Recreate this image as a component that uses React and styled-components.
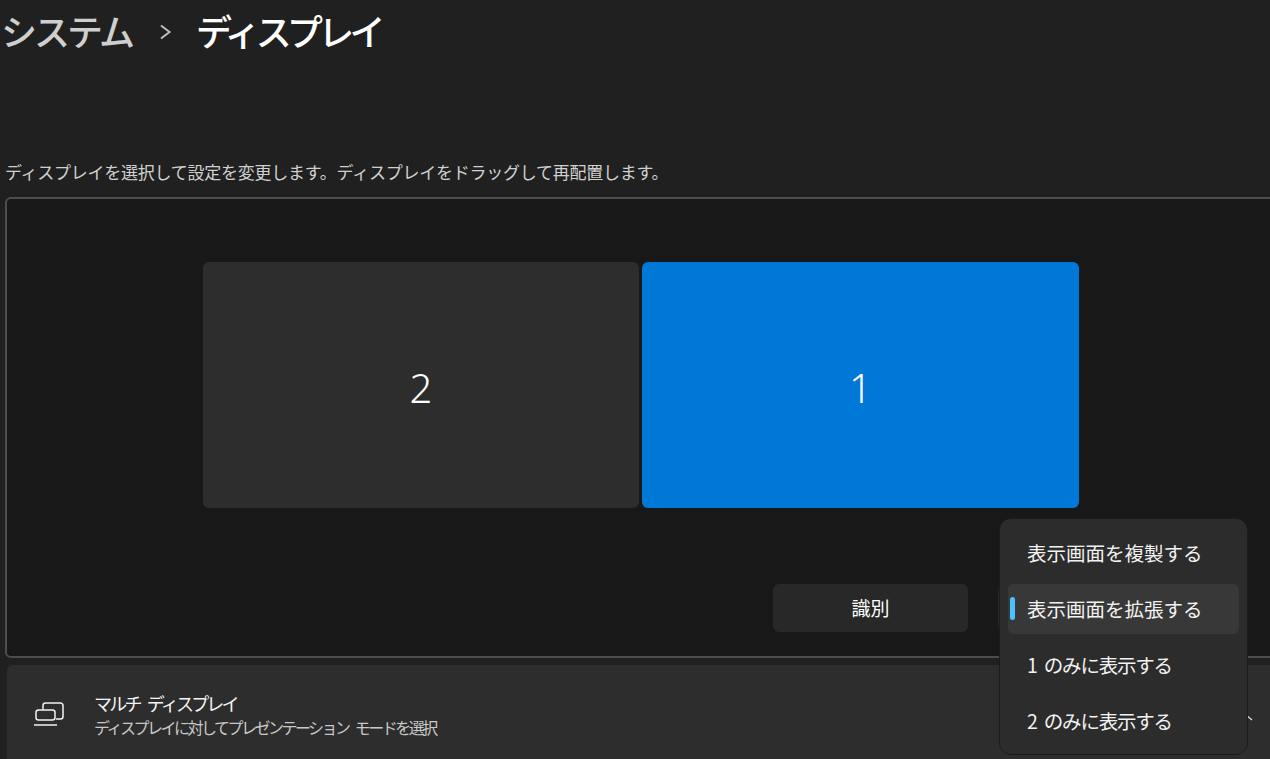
import React from 'react';
import styled, { createGlobalStyle } from 'styled-components';

const Global = createGlobalStyle`
  html, body {
    margin: 0;
    height: 100%;
    overflow: hidden;
    background: #202020;
  }
  * { box-sizing: border-box; }
`

const Page = styled.div`
  width: 1270px;
  height: 759px;
  overflow: hidden;
  background: #202020;
  color: #fff;
  font-family: "Noto Sans CJK JP", "Noto Sans", sans-serif;
`

const Breadcrumb = styled.div`
  display: flex;
  align-items: center;
  height: 64px;
  padding: 0 0 5px 1px;
  font-size: 36px;
  font-weight: 500;
`

const Parent = styled.span`
  color: #cfcfcf;
  letter-spacing: -3px;
`

const Current = styled.span`
  color: #fff;
  letter-spacing: -4.8px;
`

const Hint = styled.p`
  margin: 96px 0 0 5px;
  height: 24px;
  font-size: 17px;
  line-height: 24px;
  letter-spacing: -0.25px;
  color: #d0d0d0;
`

const Arrangement = styled.div`
  position: relative;
  margin: 13px 0 0 5px;
  width: 1290px;
  height: 461px;
  background: #181818;
  border: 2px solid #4d4d4d;
  border-radius: 6px;
  padding: 63px 0 0 196px;
`

const Monitors = styled.div`
  display: flex;
  gap: 3px;
`

const Monitor = styled.div`
  width: ${p => p.$active ? 437 : 436}px;
  height: 246px;
  padding-top: 4px;
  display: flex;
  align-items: center;
  justify-content: center;
  border-radius: 6px;
  font-family: "Noto Sans", sans-serif;
  font-size: 40px;
  font-weight: 300;
  color: #fff;
  background: ${p => p.$active ? '#0078d7' : '#2d2d2d'};
`

const Actions = styled.div`
  display: flex;
  gap: 30px;
  margin: 76px 0 0 570px;
`

const ActionButton = styled.div`
  width: ${p => p.$w}px;
  height: 48px;
  padding-bottom: 2px;
  display: flex;
  align-items: center;
  justify-content: center;
  background: #282828;
  border-radius: 6px;
  font-size: 19px;
`

const Row = styled.div`
  display: flex;
  align-items: center;
  margin: 7px 0 0 7px;
  width: 1290px;
  height: 100px;
  padding: 0 0 2px 27px;
  background: #2d2d2d;
  border-radius: 6px;
`

const RowText = styled.div`
  margin-left: 30px;
`

const RowTitle = styled.div`
  font-size: 18px;
  line-height: 25px;
  letter-spacing: -2.8px;
  word-spacing: 6px;
  color: #f4f4f4;
`

const RowSub = styled.div`
  font-size: 16px;
  line-height: 22px;
  letter-spacing: -2.5px;
  word-spacing: 5px;
  color: #c8c8c8;
`

const Menu = styled.div`
  position: absolute;
  left: 999px;
  top: 518px;
  width: 249px;
  height: 237px;
  padding: 9px 8px;
  display: flex;
  flex-direction: column;
  gap: 6px;
  background: #2c2c2c;
  border: 1px solid #1c1c1c;
  border-radius: 12px;
`

const MenuItem = styled.div`
  position: relative;
  flex: 0 0 50px;
  display: flex;
  align-items: center;
  padding: 0 0 2px 19px;
  border-radius: 6px;
  font-size: 19.5px;
  letter-spacing: ${p => p.$tight ? '-1.2px' : '0'};
  word-spacing: ${p => p.$tight ? '4px' : '0'};
  color: #f2f2f2;
  background: ${p => p.$selected ? '#383838' : 'transparent'};
`

const Pill = styled.span`
  position: absolute;
  left: 2px;
  top: 13px;
  width: 5px;
  height: 23px;
  border-radius: 3px;
  background: #4cc2ff;
`

const Caret = styled.svg`
  position: absolute;
  left: 1244px;
  top: 714px;
`

const ChevronIcon = styled.svg`
  flex: none;
  margin: 5px 24px 0 27px;
`

const Chevron = () => (
  <ChevronIcon width="13" height="16" viewBox="0 0 13 16">
    <path d="M2 1.5l8.5 6.5-8.5 6.5" fill="none" stroke="#bdbdbd" strokeWidth="2" />
  </ChevronIcon>
)

const MultiDisplayIcon = () => (
  <svg width="30" height="24" viewBox="0 0 30 24" fill="none" stroke="#f2f2f2" strokeWidth="1.5">
    <path d="M9 7.5V3.5A2.5 2.5 0 0 1 11.5 1h15A2.5 2.5 0 0 1 29 3.5v11a2.5 2.5 0 0 1-2.5 2.5H22" />
    <rect x="2" y="8" width="19" height="10" rx="2.5" />
    <path d="M0 23h23" />
  </svg>
)

export default function App() {
  return (
    <Page>
      <Global />
      <Breadcrumb>
        <Parent>システム</Parent>
        <Chevron />
        <Current>ディスプレイ</Current>
      </Breadcrumb>
      <Hint>ディスプレイを選択して設定を変更します。ディスプレイをドラッグして再配置します。</Hint>
      <Arrangement>
        <Monitors>
          <Monitor>2</Monitor>
          <Monitor $active>1</Monitor>
        </Monitors>
        <Actions>
          <ActionButton $w={195}>識別</ActionButton>
          <ActionButton $w={250} />
        </Actions>
      </Arrangement>
      <Row>
        <MultiDisplayIcon />
        <RowText>
          <RowTitle>マルチ ディスプレイ</RowTitle>
          <RowSub>ディスプレイに対してプレゼンテーション モードを選択</RowSub>
        </RowText>
      </Row>
      <Caret width="12" height="10" viewBox="0 0 12 10">
        <path d="M2 1l6 5" fill="none" stroke="#d8d8d8" strokeWidth="1.4" />
      </Caret>
      <Menu>
        <MenuItem>表示画面を複製する</MenuItem>
        <MenuItem $selected><Pill />表示画面を拡張する</MenuItem>
        <MenuItem $tight>1 のみに表示する</MenuItem>
        <MenuItem $tight>2 のみに表示する</MenuItem>
      </Menu>
    </Page>
  );
}
